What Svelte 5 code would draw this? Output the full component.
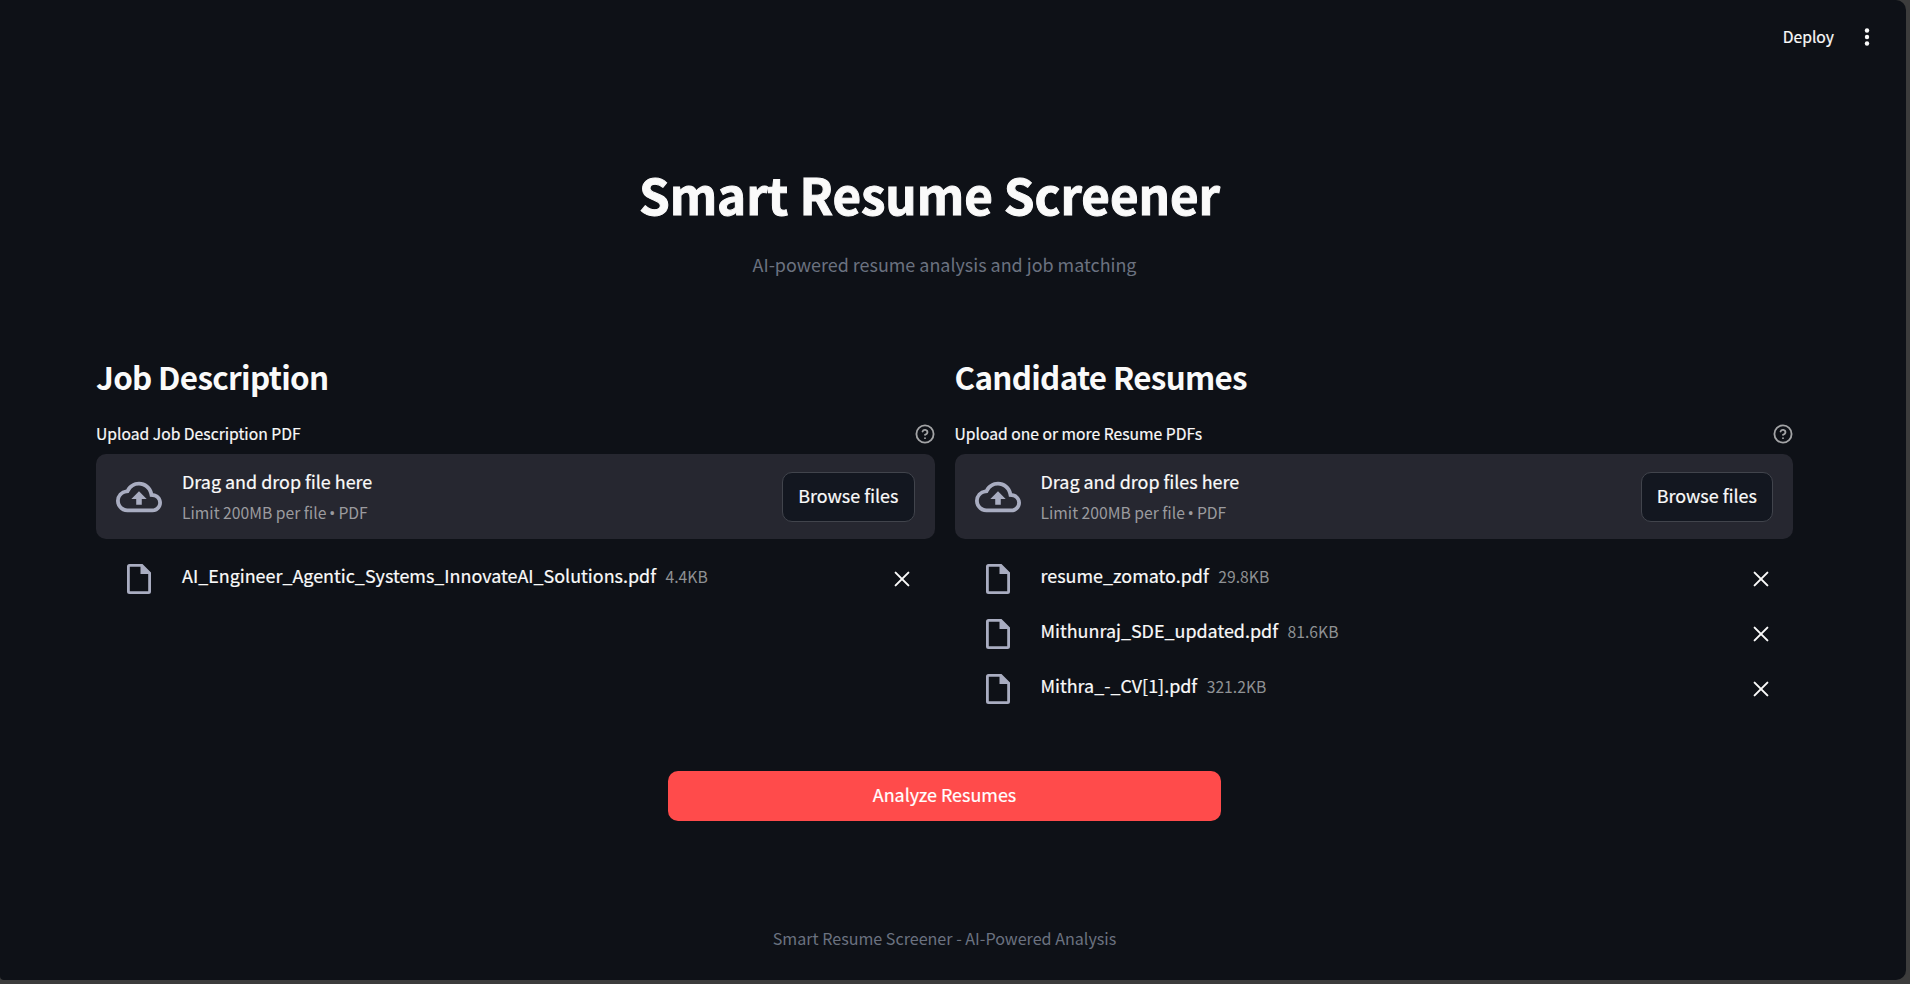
<script>
  const columns = [
    {
      title: 'Job Description',
      label: 'Upload Job Description PDF',
      hint: 'Drag and drop file here',
      files: [{ name: 'AI_Engineer_Agentic_Systems_InnovateAI_Solutions.pdf', size: '4.4KB' }]
    },
    {
      title: 'Candidate Resumes',
      label: 'Upload one or more Resume PDFs',
      hint: 'Drag and drop files here',
      files: [
        { name: 'resume_zomato.pdf', size: '29.8KB' },
        { name: 'Mithunraj_SDE_updated.pdf', size: '81.6KB' },
        { name: 'Mithra_-_CV[1].pdf', size: '321.2KB' }
      ]
    }
  ];
</script>

<div class="window">
  <header>
    <span class="deploy">Deploy</span>
    <svg width="6" height="18" viewBox="0 0 6 18" fill="#fafafa"><circle cx="3" cy="2.5" r="2.2" /><circle cx="3" cy="9" r="2.2" /><circle cx="3" cy="15.5" r="2.2" /></svg>
  </header>
  <main>
    <h1>Smart Resume Screener</h1>
    <p class="subtitle">AI-powered resume analysis and job matching</p>
    <div class="columns">
      {#each columns as col}
        <section>
          <h2>{col.title}</h2>
          <div class="label">
            <span>{col.label}</span>
            <svg width="20" height="20" viewBox="0 0 24 24" fill="none" stroke="#a3a4a6" stroke-width="2.2" stroke-linecap="round" stroke-linejoin="round"><circle cx="12" cy="12" r="10.3" /><path d="M9.09 9a3 3 0 0 1 5.83 1c0 2-3 3-3 3M12 17h.01" /></svg>
          </div>
          <div class="drop">
            <svg width="46" height="46" viewBox="0 0 24 24" fill="#a9adc1"><path d="M19.35 10.04A7.49 7.49 0 0 0 12 4C9.11 4 6.6 5.64 5.35 8.04A5.994 5.994 0 0 0 0 14c0 3.31 2.69 6 6 6h13c2.76 0 5-2.24 5-5 0-2.64-2.05-4.78-4.65-4.96zM19 18H6c-2.21 0-4-1.79-4-4 0-2.05 1.53-3.76 3.56-3.97l1.07-.11.5-.95A5.469 5.469 0 0 1 12 6c2.62 0 4.88 1.86 5.39 4.43l.3 1.5 1.53.11A2.98 2.98 0 0 1 22 15c0 1.65-1.35 3-3 3zM8 13h2.55v3h2.9v-3H16l-4-4z" /></svg>
            <div class="hint">
              <span class="prompt">{col.hint}</span>
              <span class="limit">Limit 200MB per file <span class="bullet">•</span> PDF</span>
            </div>
            <button class="browse">Browse files</button>
          </div>
          <ul>
            {#each col.files as f}
              <li>
                <svg width="24" height="30" viewBox="0 0 24 30"><path fill="#a9adc1" fill-rule="evenodd" d="M2.5 0H15.5L24 8.5V27.5A2.5 2.5 0 0 1 21.5 30H2.5A2.5 2.5 0 0 1 0 27.5V2.5A2.5 2.5 0 0 1 2.5 0ZM2.8 2.8V27.2H21.2V10H13.5V2.8Z" /></svg>
                <span class="name">{f.name}</span><span class="size">{f.size}</span>
                <svg class="x" width="16" height="16" viewBox="0 0 16 16" stroke="#fafafa" stroke-width="2" stroke-linecap="round"><path d="M1.6 1.6L14.4 14.4M14.4 1.6L1.6 14.4" /></svg>
              </li>
            {/each}
          </ul>
        </section>
      {/each}
    </div>
    <button class="analyze">Analyze Resumes</button>
    <p class="footer">Smart Resume Screener - AI-Powered Analysis</p>
  </main>
</div>

<style>
  :global(body) { background: #3c3c3c; overflow: hidden; }
  .window {
    box-sizing: border-box; width: 1906px; height: 980px;
    background: #0e1117; border-radius: 0 10px 10px 4px; color: #fafafa;
    font-family: "Noto Sans CJK SC", "Noto Sans", sans-serif;
  }
  header { display: flex; justify-content: flex-end; align-items: center; height: 73px; padding-right: 36.5px; gap: 29.5px; box-sizing: border-box; }
  .deploy { font-size: 15.7px; -webkit-text-stroke: 0.2px; }
  h1, h2, p, ul { margin: 0; padding: 0; font-weight: 400; }
  main { padding: 88px 0 0 96px; width: 1697px; }
  h1 { font-size: 49.3px; line-height: 66px; font-weight: 700; text-align: center; padding-right: 30px; letter-spacing: -0.06px; -webkit-text-stroke: 1px; }
  .subtitle { margin-top: 22px; font-size: 17.93px; line-height: 30px; text-align: center; color: #6b7280; }
  .columns { display: grid; grid-template-columns: 1fr 1fr; gap: 20px; margin-top: 77px; height: 361px; }
  h2 { font-size: 31.4px; line-height: 42px; font-weight: 600; letter-spacing: -0.68px; }
  .label { display: flex; justify-content: space-between; align-items: center; margin-top: 24px; font-size: 15.68px; height: 24px; line-height: 24px; -webkit-text-stroke: 0.2px; }
  .drop { display: flex; align-items: center; box-sizing: border-box; height: 85px; margin-top: 8px; padding: 0 20px; border-radius: 10px; background: #262730; }
  .hint { display: flex; flex-direction: column; margin-left: 20px; flex: 1; }
  .prompt { font-size: 17.93px; line-height: 28px; padding-bottom: 4px; -webkit-text-stroke: 0.2px; }
  .limit { font-size: 15.7px; line-height: 28px; color: #9b9b9f; }
  .bullet { display: inline-block; width: 5px; font-family: "Open Sans", sans-serif; font-size: 17px; line-height: 20px; text-indent: -0.8px; }
  button { font: inherit; color: inherit; font-size: 17.93px; -webkit-text-stroke: 0.2px; }
  .browse { height: 50px; width: 132.5px; padding: 0 0 4px; border: 1px solid #41444c; border-radius: 10px; background: #131720; }
  ul { list-style: none; margin-top: 12.5px; }
  li { display: flex; align-items: center; height: 55px; padding: 0 24.5px 0 31px; }
  .name { font-size: 17.93px; margin: 0 0 8px 31px; -webkit-text-stroke: 0.2px; }
  .size { font-size: 15.7px; margin: 0 0 6px 9.5px; color: #8f9194; }
  .x { margin: 0 0 0 auto; }
  .analyze { display: block; width: 553px; height: 50px; margin: 54px auto 0; padding: 0 0 4px; border: 0; border-radius: 10px; background: #ff4b4b; color: #fff; }
  .footer { margin-top: 103px; text-align: center; font-size: 16.1px; line-height: 28px; color: #6b7280; }
</style>
